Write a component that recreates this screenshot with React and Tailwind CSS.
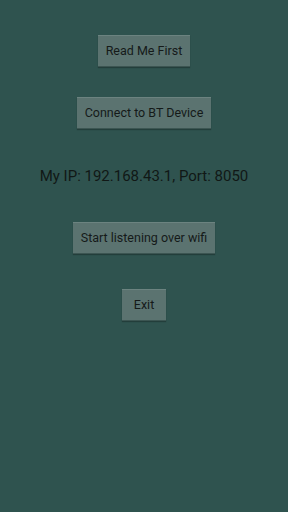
export default function App() {
  const btn =
    "h-[32px] min-w-[44px] px-[8px] bg-[#5b7370] text-[#151a19] text-[12.5px] leading-none border-t border-t-[#6c8380] border-b border-b-[#3c5552] shadow-[0_1px_1px_rgba(0,0,0,0.25)]";
  return (
    <div
      className="w-[288px] h-[512px] bg-[#2f534f] flex flex-col items-center"
      style={{ fontFamily: "Roboto, 'Noto Sans', sans-serif" }}
    >
      <button className={btn + " mt-[35px]"}>Read Me First</button>
      <button className={btn + " mt-[30px]"}>Connect to BT Device</button>
      <div className="mt-[40px] text-[15px] text-[#111816] leading-none">
        My IP: 192.168.43.1, Port: 8050
      </div>
      <button className={btn + " mt-[38px]"}>Start listening over wifi</button>
      <button className={btn + " mt-[35px]"}>Exit</button>
    </div>
  );
}
